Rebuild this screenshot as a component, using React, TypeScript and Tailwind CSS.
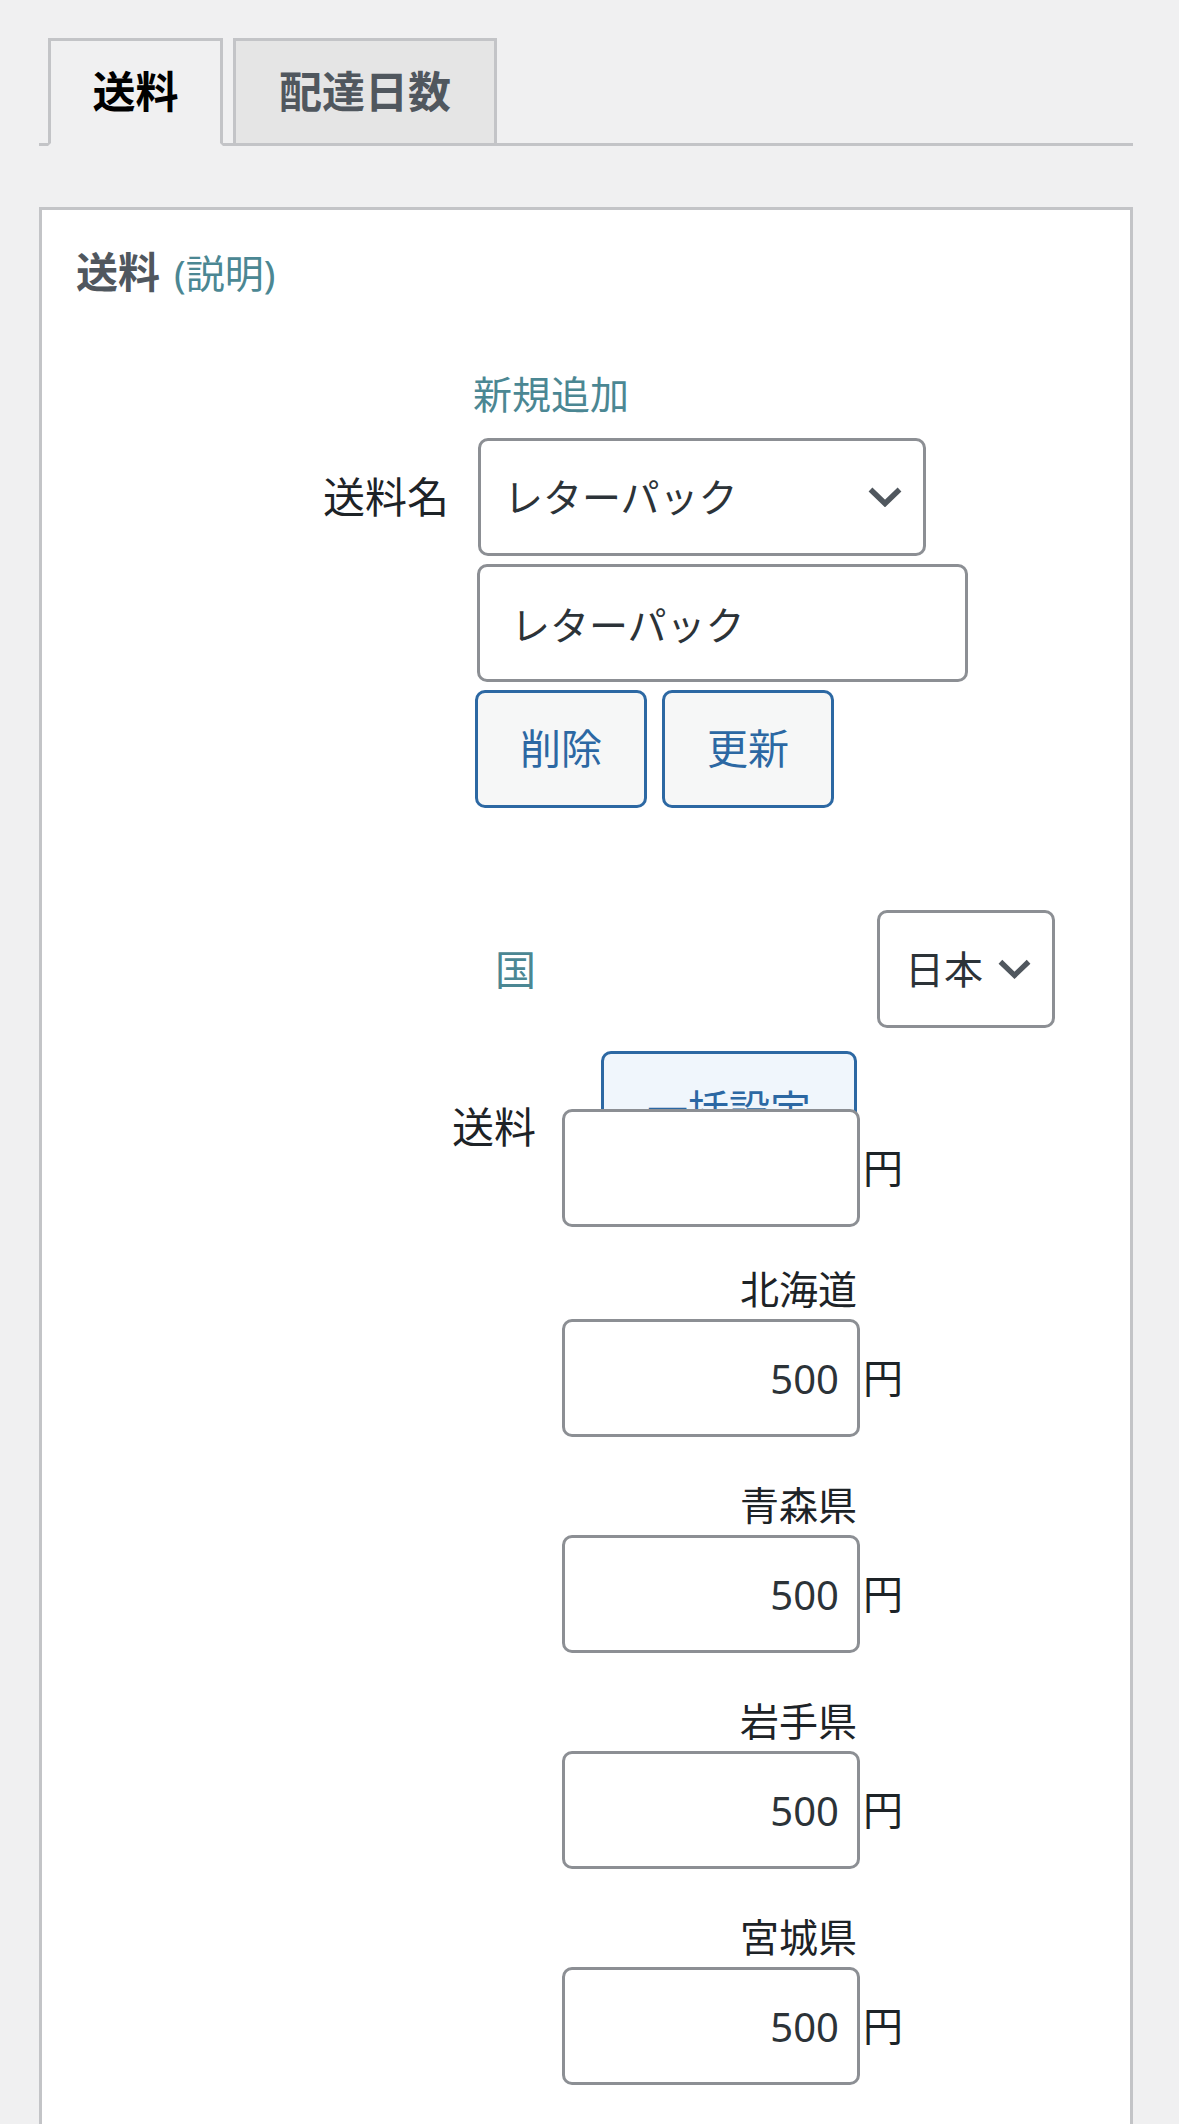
import React from "react"

const prefectures = [
  { name: "北海道", price: "500" },
  { name: "青森県", price: "500" },
  { name: "岩手県", price: "500" },
  { name: "宮城県", price: "500" },
]

function Chevron({ className }: { className?: string }) {
  return (
    <svg viewBox="0 0 34 20" className={className} fill="none" stroke="currentColor" strokeWidth="5.5">
      <path d="M2.5 2.5 L17 16.5 L31.5 2.5" />
    </svg>
  )
}

export default function App() {
  return (
    <div className="min-h-screen bg-[#f0f0f1] pt-[38px] pl-[39px] pr-[46px] font-['Noto_Sans','Noto_Sans_CJK_JP',sans-serif] text-[40px] text-[#1d2327]">
      {/* タブ */}
      <nav className="flex items-start gap-[10px] border-b-[3px] border-[#c3c4c7] pl-[9px]">
        <a className="-mb-[3px] flex h-[108px] w-[175px] items-center justify-center border-[3px] border-[#c3c4c7] border-b-[#f0f0f1] bg-[#f0f0f1] text-[43px] font-bold text-black">
          送料
        </a>
        <a className="flex h-[105px] w-[264px] items-center justify-center border-[3px] border-b-0 border-[#c3c4c7] bg-[#e5e5e5] text-[43px] font-bold text-[#50575e]">
          配達日数
        </a>
      </nav>

      <div className="mt-[61px] min-h-[1960px] border-[3px] border-[#c3c4c7] bg-white">
        <h2 className="flex items-baseline pt-[36px] pl-[34px] leading-[52px]">
          <span className="text-[42px] font-semibold text-[#50575e]">送料</span>
          <a className="ml-[14px] text-[39px] text-[#4b8793]">(説明)</a>
        </h2>

        {/* 送料名 */}
        <div className="mt-[71px] flex gap-[27px]">
          <div className="w-[407px] shrink-0 pt-[103px] text-right text-[42px] leading-[48px]">送料名</div>
          <div className="flex flex-col items-start">
            <a className="-ml-[3px] text-[39px] leading-[48px] text-[#4b8793]">新規追加</a>
            <div className="mt-[20px] ml-[2px] flex h-[118px] w-[448px] items-center justify-between rounded-[10px] border-[3px] border-[#8c8f94] pl-[23px] pr-[21px] text-[39px] text-[#2c3338]">
              <span>レターパック</span>
              <Chevron className="h-[20px] w-[34px] text-[#50575e]" />
            </div>
            <input
              className="mt-[8px] ml-[1px] h-[118px] w-[491px] rounded-[10px] border-[3px] border-[#8c8f94] px-[31px] text-[39px] text-[#2c3338]"
              defaultValue="レターパック"
            />
            <div className="mt-[8px] -ml-[1px] flex gap-[15px]">
              <button className="h-[118px] w-[172px] rounded-[10px] border-[3px] border-[#2c68a3] bg-[#f6f7f7] text-[41px] text-[#2c68a3]">削除</button>
              <button className="h-[118px] w-[172px] rounded-[10px] border-[3px] border-[#2c68a3] bg-[#f6f7f7] text-[41px] text-[#2c68a3]">更新</button>
            </div>
          </div>
        </div>

        {/* 国・送料 */}
        <div className="mt-[102px]">
          <div className="flex items-center gap-[26px]">
            <div className="w-[494px] shrink-0 text-right text-[41px] leading-[48px] text-[#4b8793]">国</div>
            <div className="ml-[315px] flex h-[118px] w-[178px] items-center justify-between rounded-[10px] border-[3px] border-[#8c8f94] pl-[25px] pr-[21px] text-[39px] text-[#2c3338]">
              <span>日本</span>
              <Chevron className="h-[20px] w-[33px] text-[#50575e]" />
            </div>
          </div>

          <div className="mt-[23px] h-[58px] pl-[559px]">
            <button className="h-[118px] w-[256px] rounded-[10px] border-[3px] border-[#2c68a3] bg-[#f0f6fc] text-[41px] text-[#2c68a3]">一括設定</button>
          </div>

          <div className="flex items-start gap-[26px]">
            <div className="-mt-[6px] w-[494px] shrink-0 text-right text-[42px] leading-[48px]">送料</div>
            <div className="flex items-center">
              <input className="relative h-[118px] w-[298px] rounded-[10px] border-[3px] border-[#8c8f94] bg-white pr-[18px] text-right text-[#2c3338]" defaultValue="" />
              <span className="ml-[3px]">円</span>
            </div>
          </div>

          <div className="mt-[38px] flex flex-col gap-[44px] pl-[520px]">
            {prefectures.map((p) => (
              <div key={p.name}>
                <div className="mb-[6px] w-[298px] pr-[3px] text-right text-[39px] leading-[48px]">{p.name}</div>
                <div className="flex items-center">
                  <input
                    className="h-[118px] w-[298px] rounded-[10px] border-[3px] border-[#8c8f94] bg-white pr-[18px] text-right text-[#2c3338]"
                    defaultValue={p.price}
                  />
                  <span className="ml-[3px]">円</span>
                </div>
              </div>
            ))}
          </div>
        </div>
      </div>
    </div>
  )
}
